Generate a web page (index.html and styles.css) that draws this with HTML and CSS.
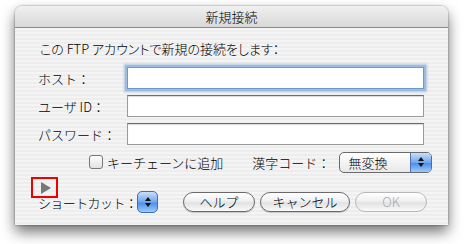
FILE: index.html
```html
<!DOCTYPE html>
<html lang="ja">
<head>
  <meta charset="UTF-8">
  <title>新規接続</title>
  <link rel="stylesheet" href="styles.css">
</head>
<body>
<div class="window">
  <div class="titlebar">新規接続</div>
  <div class="content">
    <p class="intro">この FTP アカウントで新規の接続をします：</p>

    <div class="field-row">
      <span class="label">ホスト：</span>
      <span class="text-field focused"></span>
    </div>
    <div class="field-row">
      <span class="label">ユーザ ID：</span>
      <span class="text-field"></span>
    </div>
    <div class="field-row">
      <span class="label">パスワード：</span>
      <span class="text-field"></span>
    </div>

    <div class="options-row">
      <span class="checkbox"></span>
      <span class="check-label">キーチェーンに追加</span>
      <span class="kanji-label">漢字コード：</span>
      <span class="popup">
        <span class="popup-value">無変換</span>
        <span class="popup-arrows"><span class="up"></span><span class="down"></span></span>
      </span>
    </div>

    <div class="disclosure-row">
      <span class="marker"><span class="triangle"></span></span>
    </div>

    <div class="button-row">
      <span class="label short">ショートカット：</span>
      <span class="mini-popup"><span class="up"></span><span class="down"></span></span>
      <span class="button first">ヘルプ</span>
      <span class="button wide">キャンセル</span>
      <span class="button disabled">OK</span>
    </div>
  </div>
</div>
</body>
</html>
```

FILE: styles.css
```css
html, body {
    margin: 0;
    padding: 0;
    background: #fff;
}
body {
    width: 465px;
    height: 244px;
    padding: 6px 0 0 15px;
    box-sizing: border-box;
    font-family: "Noto Sans CJK JP", "Liberation Sans", sans-serif;
    font-size: 13px;
    font-weight: 300;
    color: #000;
}
.window {
    width: 433px;
    height: 219px;
    border-radius: 7px 7px 0 0;
    background: repeating-linear-gradient(#ededed 0, #ededed 2px, #f4f4f4 2px, #f4f4f4 4px);
    box-shadow: 0 7px 14px rgba(0,0,0,0.55), 0 0 2px rgba(0,0,0,0.5);
    overflow: hidden;
}
.titlebar {
    height: 21px;
    line-height: 21px;
    text-align: center;
    background: linear-gradient(#f0f0f0, #d8d8d8);
    border-bottom: 1px solid #8a8a8a;
}
.content {
    padding: 12px 0 0 23px;
}
.intro {
    margin: 0 0 6px 2px;
    height: 18px;
    line-height: 18px;
    font-feature-settings: "palt";
}
.field-row {
    display: flex;
    align-items: center;
    height: 28px;
}
.label {
    width: 89px;
    flex: none;
    white-space: nowrap;
}
.text-field {
    width: 295px;
    height: 20px;
    background: #fff;
    border: 1px solid #9a9a9a;
    border-top-color: #6e6e6e;
    box-shadow: inset 0 1px 1px rgba(0,0,0,0.15);
}
.text-field.focused {
    border-color: #6d9acb;
    box-shadow: 0 0 0 2px #9cbde0, 0 0 2px 3px rgba(110,160,215,0.5);
}
.options-row {
    display: flex;
    align-items: center;
    height: 24px;
    margin-top: 2px;
}
.checkbox {
    width: 12px;
    height: 12px;
    margin-left: 51px;
    border: 1px solid #777;
    border-radius: 3px;
    background: linear-gradient(#fdfdfd, #e2e2e2);
}
.check-label {
    margin-left: 4px;
}
.kanji-label {
    margin-left: 29px;
}
.popup {
    display: flex;
    width: 91px;
    height: 19px;
    margin-left: 9px;
    border: 1px solid #6a6a6a;
    border-radius: 5px;
    background: linear-gradient(#ffffff, #e8e8e8);
    overflow: hidden;
}
.popup-value {
    flex: 1;
    padding-left: 8px;
    line-height: 19px;
}
.popup-arrows, .mini-popup {
    display: flex;
    flex-direction: column;
    align-items: center;
    justify-content: center;
    gap: 2px;
    background: linear-gradient(#c9defa, #6fa7ef 50%, #4e8fe8 55%, #9ccaf9);
}
.popup-arrows {
    width: 20px;
    border-left: 1px solid #4b75b8;
}
.up {
    border: 3px solid transparent;
    border-top: 0;
    border-bottom: 4px solid #111;
}
.down {
    border: 3px solid transparent;
    border-bottom: 0;
    border-top: 4px solid #111;
}
.disclosure-row {
    height: 14px;
    margin: 3px 0 0 -7px;
}
.marker {
    display: flex;
    align-items: center;
    justify-content: center;
    width: 23px;
    height: 17px;
    border: 2px solid #ee0000;
}
.triangle {
    border-left: 10px solid #777;
    border-top: 6px solid transparent;
    border-bottom: 6px solid transparent;
    margin-left: 2px;
}
.button-row {
    display: flex;
    align-items: center;
    height: 22px;
}
.label.short {
    width: 99px;
    letter-spacing: -0.6px;
}
.mini-popup {
    width: 19px;
    height: 20px;
    border: 1px solid #3f6fb5;
    border-radius: 5px;
}
.button {
    width: 70px;
    height: 18px;
    line-height: 18px;
    text-align: center;
    margin-left: 5px;
    border: 1px solid #6a6a6a;
    border-radius: 10px;
    background: linear-gradient(#ffffff, #f0f0f0 45%, #e2e2e2 55%, #fafafa);
    box-shadow: 0 1px 1px rgba(0,0,0,0.2);
}
.button.first {
    margin-left: 25px;
}
.button.wide {
    width: 88px;
}
.button.disabled {
    color: #aaa;
    border-color: #b8b8b8;
    box-shadow: none;
}
```
